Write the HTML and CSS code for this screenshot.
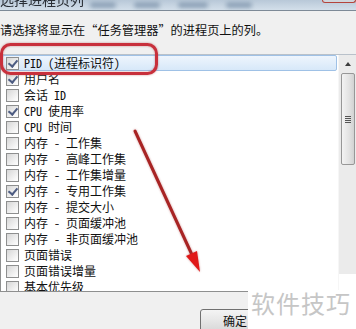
FILE: index.html
```html
<!DOCTYPE html>
<html lang="zh-CN">
<head>
  <meta charset="UTF-8">
  <title>选择进程页列</title>
  <link rel="stylesheet" href="styles.css">
</head>
<body>
  <div class="titlebar">
    <span class="title-text">选择进程页列</span>
    <span class="blob b1"></span>
    <span class="blob b2"></span>
    <span class="blob b3"></span>
    <span class="blob b4"></span>
    <span class="close-btn"></span>
  </div>

  <p class="intro">请选择将显示在“任务管理器”的进程页上的列。</p>

  <div class="listbox">
    <ul class="rows">
      <li class="row selected"><span class="check on"></span>PID (进程标识符)</li>
      <li class="row"><span class="check on"></span>用户名</li>
      <li class="row"><span class="check"></span>会话 ID</li>
      <li class="row"><span class="check on"></span>CPU 使用率</li>
      <li class="row"><span class="check"></span>CPU 时间</li>
      <li class="row"><span class="check"></span>内存 - 工作集</li>
      <li class="row"><span class="check"></span>内存 - 高峰工作集</li>
      <li class="row"><span class="check"></span>内存 - 工作集增量</li>
      <li class="row"><span class="check on"></span>内存 - 专用工作集</li>
      <li class="row"><span class="check"></span>内存 - 提交大小</li>
      <li class="row"><span class="check"></span>内存 - 页面缓冲池</li>
      <li class="row"><span class="check"></span>内存 - 非页面缓冲池</li>
      <li class="row"><span class="check"></span>页面错误</li>
      <li class="row"><span class="check"></span>页面错误增量</li>
      <li class="row"><span class="check"></span>基本优先级</li>
    </ul>
    <div class="scrollbar">
      <div class="sb-up"><span class="arrow-up"></span></div>
      <div class="sb-thumb"><span class="grip"></span></div>
      <div class="sb-track"></div>
      <div class="sb-down"></div>
    </div>
  </div>

  <div class="footer">
    <button class="ok-btn">确定</button>
  </div>

  <!-- annotation drawn over the screenshot -->
  <svg class="annotation" width="356" height="329" viewBox="0 0 356 329">
    <rect x="1.5" y="44.5" width="155" height="29" rx="9" fill="none" stroke="#c8303c" stroke-width="3"/>
    <line x1="135" y1="131" x2="193" y2="257" stroke="#a82424" stroke-width="3" stroke-linecap="round"/>
    <polygon points="200,272 197,251 186,256" fill="#e01818"/>
  </svg>

  <div class="watermark">软件技巧</div>
</body>
</html>
```

FILE: styles.css
```css
* {
  margin: 0;
  padding: 0;
  box-sizing: border-box;
}
body {
  position: relative;
  width: 356px;
  height: 329px;
  overflow: hidden;
  background: #f0f0f0;
  font-family: "Noto Sans Mono CJK SC", "Noto Sans CJK SC", "DejaVu Sans Mono", monospace;
  color: #111;
}
.titlebar {
  position: relative;
  display: flex;
  height: 11px;
  overflow: hidden;
  background: linear-gradient(#b8c8d8, #d3dfea);
  border-bottom: 1px solid #7d8a97;
}
.title-text {
  font-size: 14px;
  line-height: 14px;
  margin-top: -8px;
  color: #2a2f36;
  filter: blur(0.5px);
  white-space: nowrap;
}
.blob {
  width: 26px;
  height: 6px;
  margin-top: 2px;
  margin-left: 18px;
  border-radius: 3px;
  background: #8fa3b8;
  filter: blur(2px);
}
.b1 { margin-left: 6px; }
.b3 { width: 30px; }
.close-btn {
  margin-left: auto;
  width: 34px;
  height: 3px;
  background: #d0d6dc;
  border: 1px solid #b4443c;
  border-top: none;
  border-radius: 0 0 3px 3px;
}
.intro {
  margin-top: 11px;
  font-size: 12.2px;
  line-height: 16px;
  white-space: nowrap;
}
.listbox {
  display: flex;
  margin-top: 16px;
  height: 238px;
  background: #fff;
  border-top: 1px solid #b9c1ca;
  border-left: 1px solid #8e8f8f;
  border-bottom: 1px solid #8e8f8f;
  overflow: hidden;
}
.rows {
  flex: 1;
  list-style: none;
}
.row {
  display: flex;
  align-items: center;
  height: 16px;
  margin: 0 1px;
  padding-left: 3px;
  border: 1px solid transparent;
  font-size: 12px;
  line-height: 14px;
  white-space: pre;
}
.row.selected {
  border-color: #9fc1e6;
  border-radius: 2px;
  background: linear-gradient(#eef5fd, #d7e8f9);
}
.check {
  position: relative;
  width: 13px;
  height: 13px;
  margin-right: 5px;
  border: 1px solid #8e8f8f;
  background: linear-gradient(135deg, #d6d6d6, #f4f4f4 70%, #fff);
  flex-shrink: 0;
}
.check.on::after {
  content: "";
  position: absolute;
  left: 3px;
  top: 0px;
  width: 4px;
  height: 7px;
  border-right: 2px solid #4d5c82;
  border-bottom: 2px solid #4d5c82;
  transform: rotate(40deg);
}
.scrollbar {
  display: flex;
  flex-direction: column;
  width: 18px;
  background: #ebebeb;
  border-left: 1px solid #f6f6f6;
}
.sb-up {
  display: flex;
  justify-content: center;
  align-items: center;
  height: 17px;
}
.arrow-up {
  width: 0;
  height: 0;
  border-left: 3.5px solid transparent;
  border-right: 3.5px solid transparent;
  border-bottom: 4px solid #3c3c3c;
}
.sb-thumb {
  display: flex;
  justify-content: center;
  align-items: center;
  height: 92px;
  margin: 1px 1px 0 2px;
  border: 1px solid #979797;
  border-radius: 2px;
  background: linear-gradient(90deg, #f3f3f3, #e2e2e2 60%, #d2d2d2);
}
.grip {
  width: 6px;
  height: 7px;
  background: repeating-linear-gradient(#555 0 1px, transparent 1px 2px);
}
.sb-track {
  flex: 1;
}
.sb-down {
  height: 17px;
  background: #fff;
}
.footer {
  height: 36px;
  padding: 15px 0 0 200px;
}
.ok-btn {
  width: 70px;
  height: 24px;
  border: 1px solid #707070;
  border-radius: 3px;
  background: linear-gradient(#f4f4f4, #e6e6e6 50%, #d6d6d6);
  font-family: "Noto Sans CJK SC", sans-serif;
  font-size: 12px;
  color: #111;
}
.annotation {
  position: absolute;
  left: 0;
  top: 0;
  filter: drop-shadow(0 0 1px rgba(160, 40, 40, 0.45));
}
.watermark {
  position: absolute;
  left: 248px;
  top: 290px;
  width: 108px;
  height: 39px;
  padding: 0 0 0 3px;
  background: #fff;
  color: #c6c6c6;
  font-family: "Noto Sans CJK SC", sans-serif;
  font-size: 24px;
  line-height: 26px;
  letter-spacing: 1px;
  white-space: nowrap;
}
```
